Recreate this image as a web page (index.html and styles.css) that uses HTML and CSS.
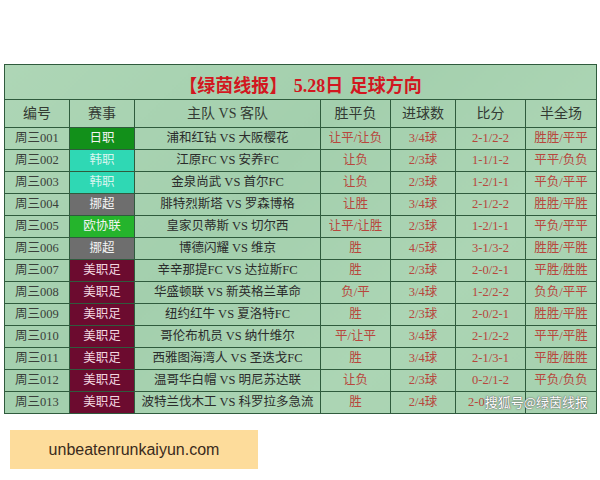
FILE: index.html
```html
<!DOCTYPE html>
<html lang="zh">
<head>
<meta charset="utf-8">
<title>绿茵线报</title>
<link rel="stylesheet" href="styles.css">
</head>
<body>
<div class="page">
  <div class="board">
    <table class="tips">
      <colgroup>
        <col class="c1"><col class="c2"><col class="c3"><col class="c4"><col class="c5"><col class="c6"><col class="c7">
      </colgroup>
      <tr class="title-row"><td colspan="7">【绿茵线报】 5.28日 足球方向</td></tr>
      <tr class="head">
        <th>编号</th><th>赛事</th><th>主队 VS 客队</th><th>胜平负</th><th>进球数</th><th>比分</th><th>半全场</th>
      </tr>
      <tr><td class="id">周三001</td><td class="lg jp">日职</td><td class="match">浦和红钻 VS 大阪樱花</td><td class="r">让平/让负</td><td class="r">3/4球</td><td class="r">2-1/2-2</td><td class="r">胜胜/平平</td></tr>
      <tr><td class="id">周三002</td><td class="lg kr">韩职</td><td class="match">江原FC VS 安养FC</td><td class="r">让负</td><td class="r">2/3球</td><td class="r">1-1/1-2</td><td class="r">平平/负负</td></tr>
      <tr><td class="id">周三003</td><td class="lg kr">韩职</td><td class="match">金泉尚武 VS 首尔FC</td><td class="r">让负</td><td class="r">2/3球</td><td class="r">1-2/1-1</td><td class="r">平负/平平</td></tr>
      <tr><td class="id">周三004</td><td class="lg no">挪超</td><td class="match">腓特烈斯塔 VS 罗森博格</td><td class="r">让胜</td><td class="r">3/4球</td><td class="r">2-1/2-2</td><td class="r">胜胜/平胜</td></tr>
      <tr><td class="id">周三005</td><td class="lg eu">欧协联</td><td class="match">皇家贝蒂斯 VS 切尔西</td><td class="r">让平/让胜</td><td class="r">2/3球</td><td class="r">1-2/1-1</td><td class="r">平负/平平</td></tr>
      <tr><td class="id">周三006</td><td class="lg no">挪超</td><td class="match">博德闪耀 VS 维京</td><td class="r">胜</td><td class="r">4/5球</td><td class="r">3-1/3-2</td><td class="r">胜胜/平胜</td></tr>
      <tr><td class="id">周三007</td><td class="lg us">美职足</td><td class="match">辛辛那提FC VS 达拉斯FC</td><td class="r">胜</td><td class="r">2/3球</td><td class="r">2-0/2-1</td><td class="r">平胜/胜胜</td></tr>
      <tr><td class="id">周三008</td><td class="lg us">美职足</td><td class="match">华盛顿联 VS 新英格兰革命</td><td class="r">负/平</td><td class="r">3/4球</td><td class="r">1-2/2-2</td><td class="r">负负/平平</td></tr>
      <tr><td class="id">周三009</td><td class="lg us">美职足</td><td class="match">纽约红牛 VS 夏洛特FC</td><td class="r">胜</td><td class="r">2/3球</td><td class="r">2-0/2-1</td><td class="r">胜胜/平胜</td></tr>
      <tr><td class="id">周三010</td><td class="lg us">美职足</td><td class="match">哥伦布机员 VS 纳什维尔</td><td class="r">平/让平</td><td class="r">3/4球</td><td class="r">2-1/2-2</td><td class="r">平平/平胜</td></tr>
      <tr><td class="id">周三011</td><td class="lg us">美职足</td><td class="match">西雅图海湾人 VS 圣迭戈FC</td><td class="r">胜</td><td class="r">3/4球</td><td class="r">2-1/3-1</td><td class="r">平胜/胜胜</td></tr>
      <tr><td class="id">周三012</td><td class="lg us">美职足</td><td class="match">温哥华白帽 VS 明尼苏达联</td><td class="r">让负</td><td class="r">2/3球</td><td class="r">0-2/1-2</td><td class="r">平负/负负</td></tr>
      <tr><td class="id">周三013</td><td class="lg us">美职足</td><td class="match">波特兰伐木工 VS 科罗拉多急流</td><td class="r">胜</td><td class="r">2/4球</td><td class="r part">2-0</td><td class="r"></td></tr>
    </table>
    <div class="watermark">搜狐号@绿茵线报</div>
  </div>
  <div class="banner">unbeatenrunkaiyun.com</div>
</div>
</body>
</html>
```

FILE: styles.css
```css
html, body {
  margin: 0;
  padding: 0;
  background: #ffffff;
}
.page {
  width: 600px;
  height: 480px;
  padding: 64px 0 0 4px;
  box-sizing: border-box;
}
.board {
  position: relative;
  width: 592px;
}
.tips {
  width: 592px;
  border-collapse: collapse;
  table-layout: fixed;
  background: #a9d3b2;
  background-image: linear-gradient(135deg, #aed6b6 0%, #a3cfad 40%, #acd5b4 70%, #a5d0ae 100%);
  font-family: "Liberation Serif", "Noto Sans CJK SC", serif;
}
.c1 { width: 65px; }
.c2 { width: 65px; }
.c3 { width: 186px; }
.c4 { width: 70px; }
.c5 { width: 65px; }
.c6 { width: 70px; }
.c7 { width: 71px; }
.tips td, .tips th {
  border: 1px solid #2f5b3d;
  padding: 0;
  text-align: center;
  height: 21px;
  font-size: 12.5px;
  font-weight: 400;
  white-space: nowrap;
  overflow: hidden;
  line-height: 21px;
}
.title-row td {
  height: 35px;
  padding-top: 8px;
  box-sizing: border-box;
  line-height: 24px;
  color: #d2171f;
  font-size: 18px;
  font-weight: 700;
  word-spacing: 2px;
  border-bottom: 1px solid #2f5b3d;
}
.head th {
  height: 27px;
  line-height: 27px;
  font-size: 14px;
  color: #333a33;
}
.id { color: #3a3f3a; font-size: 13px; }
.match { color: #2b2b2b; }
.r { color: #b8463c; }
.tips td.part { text-align: left; padding-left: 12px; }
.lg { color: #f4f4f4; }
.jp { background: #12901a; }
.kr { background: #2fd8b4; color: #d8f5ee; }
.no { background: #6e6e6e; }
.eu { background: #25b42c; }
.us { background: #6c0b2f; color: #f2d8e0; }
.watermark {
  position: absolute;
  right: 8px;
  bottom: 3px;
  font-family: "Noto Sans CJK SC", sans-serif;
  font-size: 13px;
  color: #ffffff;
  text-shadow: 0 0 1px #555, 0 0 2px #666;
  line-height: 18px;
}
.banner {
  margin: 16px 0 0 6px;
  width: 248px;
  height: 39px;
  background: #fddc9b;
  color: #3b2b1c;
  font-family: "Liberation Sans", sans-serif;
  font-size: 16px;
  display: flex;
  align-items: center;
  justify-content: center;
}
```
